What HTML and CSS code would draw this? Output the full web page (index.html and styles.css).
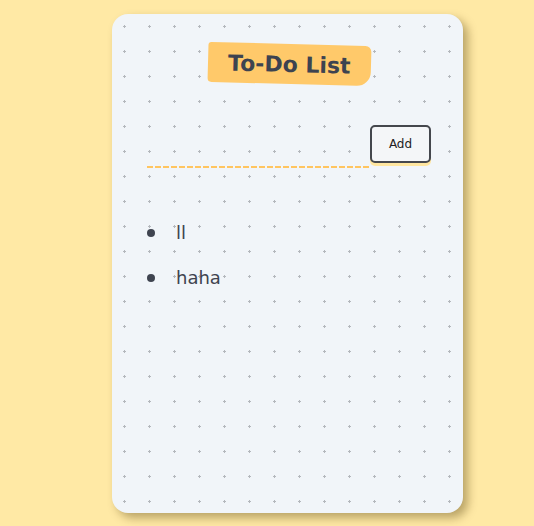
FILE: index.html
```html
<!DOCTYPE html>
<html lang="en">
<head>
<meta charset="utf-8">
<title>To-Do List</title>
<link rel="stylesheet" href="styles.css">
</head>
<body>
<div class="card">
  <div class="title-wrap">
    <h1 class="title">To-Do List</h1>
  </div>
  <form class="todo-form" onsubmit="return false">
    <input class="todo-input" type="text" aria-label="New task">
    <button class="add-btn" type="submit">Add</button>
  </form>
  <ul class="todo-list">
    <li class="todo-item">ll</li>
    <li class="todo-item">haha</li>
  </ul>
</div>
</body>
</html>
```

FILE: styles.css
```css
html, body {
  margin: 0;
  padding: 0;
}
body {
  background: #ffe9a5;
  font-family: "Comic Sans MS", "DejaVu Sans", sans-serif;
  color: #3f4450;
  height: 526px;
  overflow: hidden;
}
.card {
  box-sizing: border-box;
  width: 351px;
  height: 499px;
  margin: 14px 0 0 112px;
  padding: 30px 32px 0 35px;
  background-color: #f1f5f9;
  background-image: url("data:image/svg+xml;utf8,<svg xmlns='http://www.w3.org/2000/svg' width='25' height='25'><rect x='11' y='12' width='3' height='1' fill='%23b4b8bd'/><rect x='12' y='11' width='1' height='3' fill='%23b4b8bd'/></svg>");
  background-size: 25px 25px;
  background-position: 0 0;
  border-radius: 16px;
  box-shadow: 5px 5px 10px rgba(80, 60, 10, 0.4);
}
.title-wrap {
  display: flex;
  justify-content: center;
}
.title {
  margin: 0;
  box-sizing: border-box;
  height: 40px;
  padding: 0 20px;
  display: flex;
  align-items: center;
  font-size: 22px;
  font-weight: bold;
  color: #3d4350;
  background: #ffc96a;
  border-radius: 3px 6px 14px 4px;
  transform: rotate(1.5deg);
}
.todo-form {
  display: flex;
  margin-top: 41px;
}
.todo-input {
  flex: 1;
  box-sizing: border-box;
  height: 43px;
  border: none;
  outline: none;
  background: repeating-linear-gradient(to right, #ffc560 0 6px, transparent 6px 8px) left bottom / 100% 2px no-repeat;
  font: inherit;
  padding: 0;
}
.add-btn {
  box-sizing: border-box;
  width: 61px;
  height: 38px;
  border: 2px solid #44474d;
  border-radius: 5px;
  background: #f4f6f8;
  color: #222;
  font-family: "DejaVu Sans", sans-serif;
  font-size: 12px;
  box-shadow: 0 3px 0 #ffe6a0;
  padding: 0;
}
.todo-list {
  list-style: none;
  margin: 42px 0 0;
  padding: 0;
}
.todo-item {
  display: flex;
  align-items: center;
  height: 45px;
  font-size: 18px;
  color: #3f4450;
}
.todo-item::before {
  content: "";
  width: 8px;
  height: 8px;
  border-radius: 50%;
  background: #3f4450;
  margin-right: 21px;
}
```
